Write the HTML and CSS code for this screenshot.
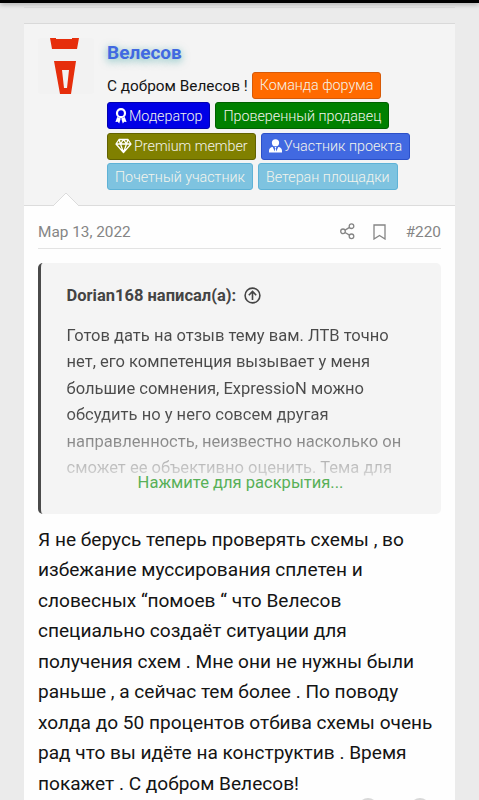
FILE: index.html
```html
<!DOCTYPE html>
<html lang="ru">
<head>
    <meta charset="UTF-8">
    <meta name="viewport" content="width=device-width, initial-scale=1.0">
    <title>Велесов - #220</title>
    <link rel="stylesheet" href="styles.css">
</head>
<body>

    <div class="topbar"></div>
    <div class="previous-post"></div>

    <div class="post">
        <div class="post-user">
            <div class="avatar">
                <svg width="56" height="56" viewBox="0 0 56 56">
                    <path fill="#e62e0c" d="M12 0h6v1h16v-1h7l-2 11H14z"/>
                    <path fill="#e62e0c" fill-rule="evenodd" d="M16 23h22l-5 33H22zM24 32l2 18h3l2-18z"/>
                </svg>
            </div>
            <div class="user-info">
                <a class="username">Велесов</a>
                <div class="banners">
                    <span class="user-title">С добром Велесов !</span>
                    <span class="banner orange">Команда форума</span>
                    <span class="banner blue">
                        <svg width="12" height="16" viewBox="0 0 12 16">
                            <circle cx="6" cy="5.2" r="4" fill="none" stroke="#fff" stroke-width="2.2"/>
                            <path fill="#fff" d="M2.200 9L.4 14l2.300-.2L4.200 15.500l1.600-5zM9.800 9l1.800 5-2.300-.2-1.500 1.700-1.600-5z"/>
                        </svg>
                        Модератор</span>
                    <span class="banner green">Проверенный продавец</span>
                    <span class="banner olive">
                        <svg width="17" height="16" viewBox="0 0 17 16" fill="none" stroke="#fff" stroke-width="1.300" stroke-linejoin="round">
                            <path d="M4 1.500h9l3 4.500-7.500 8.500L1 6zM1 6h15M4 1.500L5.500 6l3 8.500 3-8.500L13 1.500M5.500 6l3-4.500 3 4.500"/>
                        </svg>
                        Premium member</span>
                    <span class="banner royal">
                        <svg width="13" height="16" viewBox="0 0 14 16">
                            <circle cx="7" cy="4.500" r="3.900" fill="#fff"/>
                            <path fill="#fff" d="M4 9l2.200 5 .5-3.500L6 9h2l-.7 1.500.5 3.500L10 9c2.500.2 4 1.700 4 4v2H0v-2c0-2.300 1.500-3.800 4-4z"/>
                        </svg>
                        Участник проекта</span>
                    <span class="banner sky">Почетный участник</span>
                    <span class="banner sky">Ветеран площадки</span>
                </div>
            </div>
            <svg class="arrow" width="28" height="15" viewBox="0 0 28 15">
                <path d="M1 14L14 1l13 13" fill="#fefefe" stroke="#dcdcdc"/>
                <path d="M2 14h24v1H2z" fill="#fefefe"/>
            </svg>
        </div>

        <div class="post-main">
            <div class="post-header">
                <span class="date">Мар 13, 2022</span>
                <svg class="share" width="15" height="17" viewBox="0 0 15 17" fill="none" stroke="#858585" stroke-width="1.300">
                    <circle cx="11.500" cy="3.200" r="2.300"/>
                    <circle cx="3" cy="8.300" r="2.300"/>
                    <circle cx="11.500" cy="13.300" r="2.300"/>
                    <path d="M5 7.100l4.500-2.700M5 9.500l4.500 2.600"/>
                </svg>
                <svg class="bookmark" width="13" height="16" viewBox="0 0 13 16" fill="none" stroke="#858585" stroke-width="1.300">
                    <path d="M1 1h11v14l-5.500-3.500L1 15z"/>
                </svg>
                <span class="number">#220</span>
            </div>

            <blockquote class="quote">
                <div class="quote-title">
                    Dorian168 написал(а):
                    <svg width="17" height="17" viewBox="0 0 17 17" fill="none" stroke="#444" stroke-width="1.600">
                        <circle cx="8.500" cy="8.500" r="7.400"/>
                        <path d="M8.500 13V4.500M4.800 8.200l3.700-3.700 3.700 3.700"/>
                    </svg>
                </div>
                <div class="quote-text">
                    Готов дать на отзыв тему вам. ЛТВ точно<br>
                    нет, его компетенция вызывает у меня<br>
                    большие сомнения, ExpressioN можно<br>
                    обсудить но у него совсем другая<br>
                    направленность, неизвестно насколько он<br>
                    сможет ее объективно оценить. Тема для
                </div>
                <div class="expand"><a>Нажмите для раскрытия...</a></div>
            </blockquote>

            <div class="message">
                Я не берусь теперь проверять схемы , во<br>
                избежание муссирования сплетен и<br>
                словесных “помоев “ что Велесов<br>
                специально создаёт ситуации для<br>
                получения схем . Мне они не нужны были<br>
                раньше , а сейчас тем более . По поводу<br>
                холда до 50 процентов отбива схемы очень<br>
                рад что вы идёте на конструктив . Время<br>
                покажет . С добром Велесов!
            </div>
            <div class="reactions">
                <span></span>
                <span></span>
            </div>
        </div>
    </div>

</body>
</html>
```
FILE: styles.css
```css
body {
    font-family: Roboto, sans-serif;
    background-color: #ebebeb;
    margin: 0;
    height: 800px;
    overflow: hidden;
}
.topbar {
    height: 3px;
    background-color: #000;
    box-shadow: 0 1px 5px rgba(0, 0, 0, 0.4);
}
.previous-post {
    height: 4px;
    margin: 0 24px 15px;
    border-bottom: 1px solid #d8d8d8;
}
.post {
    margin: 0 24px;
    background-color: #fefefe;
    border-top: 1px solid #d9d9d9;
}
.post-user {
    position: relative;
    display: flex;
    box-sizing: border-box;
    height: 182px;
    padding: 14px 14px 0;
    background-color: #f4f4f4;
    border-bottom: 1px solid #dcdcdc;
}
.avatar {
    width: 56px;
    height: 56px;
    margin-right: 13px;
    background-color: #f2f2f2;
    border-radius: 3px;
}
.avatar svg {
    display: block;
}
.user-info {
    flex: 1;
}
.username {
    display: block;
    height: 33.500px;
    line-height: 30px;
    font-size: 19px;
    font-weight: bold;
    color: #4169e1;
    text-shadow: 0 2px 8px rgba(0, 139, 139, 0.6);
}
.banners {
    display: flex;
    flex-wrap: wrap;
    gap: 3.500px 5px;
    white-space: nowrap;
}
.user-title {
    font-size: 15.350px;
    line-height: 28px;
    margin: 0 -1px 0 0;
    height: 27px;
    color: #141414;
}
.banner {
    display: flex;
    align-items: center;
    gap: 2px;
    box-sizing: border-box;
    height: 27px;
    padding: 0 7px;
    border: 1px solid;
    border-radius: 3px;
    font-size: 14.300px;
    font-weight: 300;
    color: #f4f4ec;
}
.orange {
    background-color: #ff6a00;
    border-color: #d65a08;
}
.blue {
    background-color: #0000e6;
    border-color: #0000b0;
}
.green {
    background-color: #008000;
    border-color: #006000;
}
.olive {
    background-color: #808000;
    border-color: #626200;
}
.royal {
    background-color: #4169e1;
    border-color: #2c50c8;
}
.sky {
    background-color: #7ec3e0;
    border-color: #5fb2d6;
}
.arrow {
    position: absolute;
    left: 28px;
    bottom: -2px;
}
.post-main {
    padding: 0 14px;
}
.post-header {
    display: flex;
    align-items: center;
    height: 42px;
    margin-bottom: 14px;
    border-bottom: 1px solid #e3e3e3;
    font-size: 15.350px;
    color: #858585;
}
.date {
    flex: 1;
    padding-top: 10px;
}
.share {
    margin: 8px 18px 0 0;
}
.bookmark {
    margin: 9px 20px 0 0;
}
.number {
    padding-top: 9px;
}
.quote {
    box-sizing: border-box;
    height: 251px;
    margin: 0;
    padding: 19px 25px 0;
    background-color: #f4f4f4;
    border-left: 3px solid #4a4a4a;
    border-radius: 5px;
}
.quote-title {
    display: flex;
    align-items: center;
    gap: 8px;
    height: 27px;
    padding-left: 0.500px;
    font-size: 16.500px;
    font-weight: bold;
    color: #444;
}
.quote-text {
    height: 158px;
    padding: 14px 0 0 0.500px;
    font-size: 16.550px;
    line-height: 26.400px;
    white-space: nowrap;
    color: transparent;
    background: linear-gradient(#4a4a4a 105px, #888 132px, #d0d0d0 165px);
    background-clip: text;
}
.expand {
    position: relative;
    margin-top: -10px;
    padding-right: 1px;
    font-size: 16.550px;
    line-height: 24px;
    text-align: center;
    color: #58b058;
}
.message {
    margin-top: 10.500px;
    font-size: 19.080px;
    line-height: 30.500px;
    white-space: nowrap;
    color: #141414;
}
.reactions {
    display: flex;
    justify-content: flex-end;
    gap: 32px;
    padding-right: 11px;
    margin-top: -1px;
}
.reactions span {
    width: 20px;
    height: 20px;
    border-radius: 50%;
    background-color: #d8d8d8;
}
```
